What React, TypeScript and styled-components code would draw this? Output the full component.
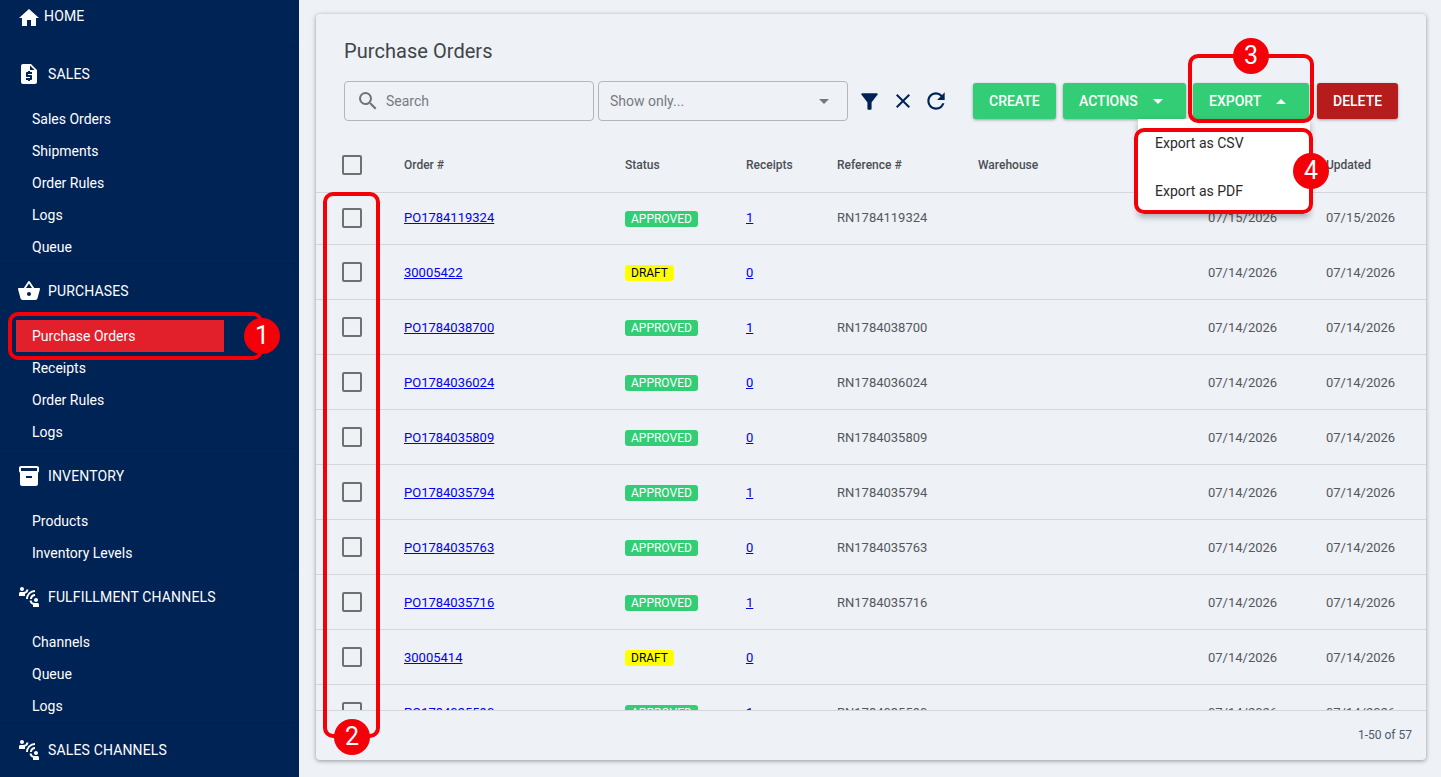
import React from "react";
import styled, { createGlobalStyle } from "styled-components";
import {
  MdHome,
  MdRequestQuote,
  MdShoppingBasket,
  MdInventory2,
  MdConnectWithoutContact,
  MdRefresh,
  MdClose,
  MdSearch,
  MdFilterAlt,
} from "react-icons/md";

const Global = createGlobalStyle`
  html, body { margin: 0; padding: 0; height: 100%; overflow: hidden; }
  body { font-family: Roboto, "Liberation Sans", sans-serif; background: #eef1f6; }
  * { box-sizing: border-box; }
`;

const Page = styled.div`
  position: relative;
  display: flex;
  width: 1441px;
  height: 777px;
  overflow: hidden;
`;

const Sidebar = styled.nav`
  width: 299px;
  flex: none;
  height: 100%;
  background: #002356;
  color: #fff;
  overflow: hidden;
`;

const Section = styled.section`
  box-shadow: 0 1px 0 #001f4c;
`;

const SectionHead = styled.div<{ $compact?: boolean; $gap?: number }>`
  display: flex;
  align-items: ${(p) => (p.$compact ? "flex-start" : "center")};
  height: ${(p) => (p.$compact ? "46px" : "57px")};
  padding-left: 17px;
  padding-top: ${(p) => (p.$compact ? "8px" : "0")};
  padding-bottom: ${(p) => (p.$compact ? "0" : "2px")};
  font-size: 14px;
  line-height: 16px;
  letter-spacing: 0.15px;
  gap: ${(p) => p.$gap ?? 8}px;
`;

const IconSlot = styled.span`
  display: inline-flex;
  align-items: center;
  justify-content: center;
  width: 23px;
  height: 20px;
  flex: none;
  svg { flex: none; }
`;

const NavItem = styled.div<{ $active?: boolean }>`
  display: flex;
  align-items: center;
  width: 208px;
  height: 32px;
  margin-left: 16px;
  padding-left: 16px;
  font-size: 14px;
  background: ${(p) => (p.$active ? "#e2202c" : "transparent")};
`;

const Main = styled.main`
  flex: 1;
  min-width: 0;
  padding: 14px 15px 17px 17px;
`;

const Card = styled.div`
  display: flex;
  flex-direction: column;
  height: 100%;
  background: #eef1f6;
  border-radius: 4px;
  box-shadow: 0 1px 4px rgba(0, 0, 0, 0.38);
`;

const Title = styled.h1`
  margin: 0;
  padding: 25px 0 0 28px;
  height: 67px;
  font-size: 20px;
  font-weight: 400;
  line-height: 24px;
  letter-spacing: 0.05px;
  color: #404447;
`;

const Toolbar = styled.div`
  display: flex;
  align-items: center;
  height: 40px;
  padding: 0 28px;
`;

const Field = styled.div`
  display: flex;
  align-items: center;
  width: 250px;
  height: 40px;
  border: 1px solid #b3b7bd;
  border-radius: 4px;
  font-size: 14px;
  color: #777b80;
`;

const SearchField = styled(Field)`
  padding-left: 11px;
  gap: 6px;
`;

const SelectField = styled(Field)`
  margin-left: 4px;
  padding: 0 18px 0 11px;
  justify-content: space-between;
`;

const Caret = styled.span<{ $up?: boolean; $color?: string }>`
  display: inline-block;
  width: 0;
  height: 0;
  border-left: 5px solid transparent;
  border-right: 5px solid transparent;
  ${(p) =>
    p.$up
      ? `border-bottom: 5px solid ${p.$color ?? "#777"};`
      : `border-top: 5px solid ${p.$color ?? "#777"};`}
`;

const ToolIcons = styled.div`
  display: flex;
  align-items: center;
  margin-left: 11px;
  color: #002356;
`;

const ToolIcon = styled.span`
  display: inline-flex;
  align-items: center;
  justify-content: center;
  width: 20px;
  height: 24px;
  margin-right: 13.5px;
  svg { flex: none; }
`;

const Actions = styled.div`
  display: flex;
  margin-left: auto;
`;

const Button = styled.div<{ $width: number; $danger?: boolean; $gap?: number }>`
  display: flex;
  align-items: center;
  gap: 15px;
  width: ${(p) => p.$width}px;
  height: 36px;
  margin-left: ${(p) => p.$gap ?? 7}px;
  padding-left: 16px;
  border-radius: 3px;
  background: ${(p) => (p.$danger ? "#b71c1c" : "#32cd74")};
  color: #fff;
  font-size: 14px;
  font-weight: 500;
  box-shadow: 0 1px 3px rgba(0, 0, 0, 0.35);
`;

const columns = "88px 221px 121px 91px 141px 230px 118px 100px";

const HeaderRow = styled.div`
  display: grid;
  grid-template-columns: ${columns};
  align-items: center;
  height: 72px;
  padding-top: 16px;
  border-bottom: 1px solid #d3d6db;
  font-size: 12px;
  font-weight: 500;
  color: #4b4f54;
  flex: none;
`;

const TableBody = styled.div`
  flex: 1;
  min-height: 0;
  overflow: hidden;
`;

const Row = styled.div<{ $first?: boolean }>`
  display: grid;
  grid-template-columns: ${columns};
  align-items: center;
  height: ${(p) => (p.$first ? "52px" : "55px")};
  padding-bottom: ${(p) => (p.$first ? "2px" : "0")};
  border-bottom: 1px solid #d3d6db;
  font-size: 13px;
  color: #54585c;
`;

const CheckCell = styled.div`
  display: flex;
  justify-content: center;
  width: 72px;
`;

const CheckBox = styled.span`
  display: block;
  width: 20px;
  height: 20px;
  border: 2px solid #707070;
  border-radius: 2px;
`;

const Link = styled.a`
  color: #0000ee;
  text-decoration: underline;
  justify-self: start;
`;

const Badge = styled.span<{ $draft?: boolean }>`
  justify-self: start;
  height: 16px;
  margin-top: 2px;
  padding: 0 6px;
  border-radius: 3px;
  font-size: 12px;
  line-height: 16px;
  background: ${(p) => (p.$draft ? "#ffff00" : "#32cd74")};
  color: ${(p) => (p.$draft ? "#000" : "#fff")};
`;

const Footer = styled.div`
  flex: none;
  display: flex;
  align-items: center;
  justify-content: flex-end;
  height: 50px;
  padding: 0 14px 1px 0;
  border-top: 1px solid #d3d6db;
  font-size: 12px;
  color: #4a5a70;
`;

const Menu = styled.div`
  position: absolute;
  left: 1138px;
  top: 119px;
  width: 172px;
  height: 95px;
  background: #fff;
  border-radius: 0 0 4px 4px;
  box-shadow: 0 3px 6px rgba(0, 0, 0, 0.3);
  font-size: 14px;
  color: #2a2a2a;
`;

const MenuItem = styled.div`
  display: flex;
  align-items: center;
  height: 48px;
  padding-left: 17px;
`;

const Callout = styled.div<{ $x: number; $y: number; $w: number; $h: number }>`
  position: absolute;
  left: ${(p) => p.$x}px;
  top: ${(p) => p.$y}px;
  width: ${(p) => p.$w}px;
  height: ${(p) => p.$h}px;
  border: 4px solid #f40009;
  border-radius: 10px;
`;

const Bubble = styled.div<{ $x: number; $y: number }>`
  position: absolute;
  left: ${(p) => p.$x - 18}px;
  top: ${(p) => p.$y - 18}px;
  width: 36px;
  height: 36px;
  border-radius: 50%;
  background: #f40009;
  color: #fff;
  font-size: 25px;
  line-height: 36px;
  text-align: center;
`;

type Nav = {
  head: string;
  icon: React.ReactNode;
  gap?: number;
  compact?: boolean;
  items: { label: string; active?: boolean }[];
};

const nav: Nav[] = [
  { head: "HOME", icon: <MdHome size={24} />, gap: 4, compact: true, items: [] },
  {
    head: "SALES",
    icon: <MdRequestQuote size={24} />,
    items: ["Sales Orders", "Shipments", "Order Rules", "Logs", "Queue"].map((label) => ({ label })),
  },
  {
    head: "PURCHASES",
    icon: <MdShoppingBasket size={24} />,
    items: [
      { label: "Purchase Orders", active: true },
      { label: "Receipts" },
      { label: "Order Rules" },
      { label: "Logs" },
    ],
  },
  {
    head: "INVENTORY",
    icon: <MdInventory2 size={24} />,
    items: ["Products", "Inventory Levels"].map((label) => ({ label })),
  },
  {
    head: "FULFILLMENT CHANNELS",
    icon: <MdConnectWithoutContact size={24} />,
    items: ["Channels", "Queue", "Logs"].map((label) => ({ label })),
  },
  { head: "SALES CHANNELS", icon: <MdConnectWithoutContact size={24} />, items: [] },
];

type Order = { id: string; status: "APPROVED" | "DRAFT"; receipts: number; ref: string; created: string; updated: string };

const rows: Order[] = [
  { id: "PO1784119324", status: "APPROVED", receipts: 1, ref: "RN1784119324", created: "07/15/2026", updated: "07/15/2026" },
  { id: "30005422", status: "DRAFT", receipts: 0, ref: "", created: "07/14/2026", updated: "07/14/2026" },
  { id: "PO1784038700", status: "APPROVED", receipts: 1, ref: "RN1784038700", created: "07/14/2026", updated: "07/14/2026" },
  { id: "PO1784036024", status: "APPROVED", receipts: 0, ref: "RN1784036024", created: "07/14/2026", updated: "07/14/2026" },
  { id: "PO1784035809", status: "APPROVED", receipts: 0, ref: "RN1784035809", created: "07/14/2026", updated: "07/14/2026" },
  { id: "PO1784035794", status: "APPROVED", receipts: 1, ref: "RN1784035794", created: "07/14/2026", updated: "07/14/2026" },
  { id: "PO1784035763", status: "APPROVED", receipts: 0, ref: "RN1784035763", created: "07/14/2026", updated: "07/14/2026" },
  { id: "PO1784035716", status: "APPROVED", receipts: 1, ref: "RN1784035716", created: "07/14/2026", updated: "07/14/2026" },
  { id: "30005414", status: "DRAFT", receipts: 0, ref: "", created: "07/14/2026", updated: "07/14/2026" },
  { id: "PO1784035590", status: "APPROVED", receipts: 1, ref: "RN1784035590", created: "07/14/2026", updated: "07/14/2026" },
];

export default function App() {
  return (
    <Page>
      <Global />
      <Sidebar>
        {nav.map((s) => (
          <Section key={s.head}>
            <SectionHead $compact={s.compact} $gap={s.gap}>
              <IconSlot>{s.icon}</IconSlot>
              {s.head}
            </SectionHead>
            {s.items.map((i) => (
              <NavItem key={i.label} $active={i.active}>
                {i.label}
              </NavItem>
            ))}
          </Section>
        ))}
      </Sidebar>
      <Main>
        <Card>
          <Title>Purchase Orders</Title>
          <Toolbar>
            <SearchField>
              <MdSearch size={24} color="#6f7376" />
              Search
            </SearchField>
            <SelectField>
              Show only...
              <Caret />
            </SelectField>
            <ToolIcons>
              <ToolIcon><MdFilterAlt size={25} /></ToolIcon>
              <ToolIcon><MdClose size={24} /></ToolIcon>
              <ToolIcon><MdRefresh size={26} /></ToolIcon>
            </ToolIcons>
            <Actions>
              <Button $width={83}>CREATE</Button>
              <Button $width={123}>ACTIONS<Caret $color="#fff" /></Button>
              <Button $width={116}>EXPORT<Caret $up $color="#fff" /></Button>
              <Button $width={81} $danger $gap={8}>DELETE</Button>
            </Actions>
          </Toolbar>
          <HeaderRow>
            <CheckCell><CheckBox /></CheckCell>
            <span>Order #</span>
            <span>Status</span>
            <span>Receipts</span>
            <span>Reference #</span>
            <span>Warehouse</span>
            <span>Created</span>
            <span>Updated</span>
          </HeaderRow>
          <TableBody>
            {rows.map((r, i) => (
              <Row key={r.id} $first={i === 0}>
                <CheckCell><CheckBox /></CheckCell>
                <Link>{r.id}</Link>
                <Badge $draft={r.status === "DRAFT"}>{r.status}</Badge>
                <Link>{r.receipts}</Link>
                <span>{r.ref}</span>
                <span />
                <span>{r.created}</span>
                <span>{r.updated}</span>
              </Row>
            ))}
          </TableBody>
          <Footer>1-50 of 57</Footer>
        </Card>
      </Main>
      <Menu>
        <MenuItem>Export as CSV</MenuItem>
        <MenuItem>Export as PDF</MenuItem>
      </Menu>
      <Callout $x={8} $y={312} $w={255} $h={48} />
      <Bubble $x={262} $y={336}>1</Bubble>
      <Callout $x={323} $y={192} $w={57} $h={546} />
      <Bubble $x={352} $y={737}>2</Bubble>
      <Callout $x={1188} $y={54} $w={126} $h={69} />
      <Bubble $x={1251} $y={56}>3</Bubble>
      <Callout $x={1134} $y={128} $w={179} $h={86} />
      <Bubble $x={1311} $y={171}>4</Bubble>
    </Page>
  );
}
